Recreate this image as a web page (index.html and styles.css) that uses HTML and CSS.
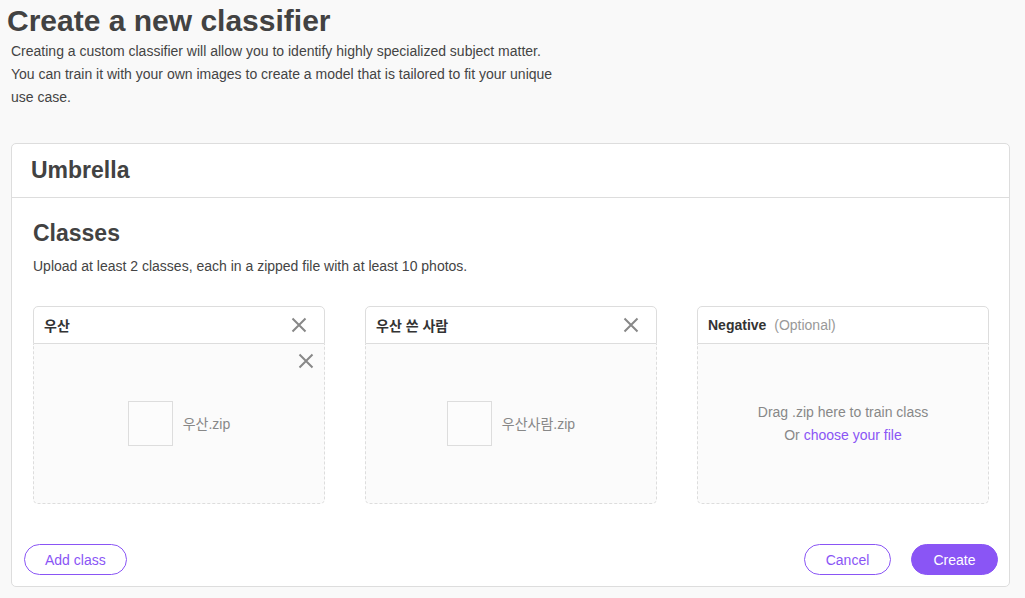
FILE: index.html
```html
<!DOCTYPE html>
<html lang="en">
<head>
<meta charset="utf-8">
<title>Create a new classifier</title>
<link rel="stylesheet" href="styles.css">
</head>
<body>
<div class="page">
  <h1 class="title">Create a new classifier</h1>
  <p class="intro">Creating a custom classifier will allow you to identify highly specialized subject matter. You can train it with your own images to create a model that is tailored to fit your unique use case.</p>

  <section class="card">
    <header class="card-head">
      <h2 class="card-title">Umbrella</h2>
    </header>
    <div class="card-body">
      <h2 class="section-title">Classes</h2>
      <p class="section-desc">Upload at least 2 classes, each in a zipped file with at least 10 photos.</p>

      <div class="classes">
        <div class="class-box">
          <div class="class-head">
            <span class="class-name">우산</span>
            <svg class="x-icon" viewBox="0 0 16 16" width="16" height="16"><path d="M1.5 1.5 14.5 14.5M14.5 1.5 1.5 14.5"/></svg>
          </div>
          <div class="class-drop filled">
            <svg class="x-icon x-file" viewBox="0 0 16 16" width="16" height="16"><path d="M1.5 1.5 14.5 14.5M14.5 1.5 1.5 14.5"/></svg>
            <div class="file">
              <span class="thumb"></span>
              <span class="file-name">우산.zip</span>
            </div>
          </div>
        </div>

        <div class="class-box">
          <div class="class-head">
            <span class="class-name">우산 쓴 사람</span>
            <svg class="x-icon" viewBox="0 0 16 16" width="16" height="16"><path d="M1.5 1.5 14.5 14.5M14.5 1.5 1.5 14.5"/></svg>
          </div>
          <div class="class-drop filled">
            <div class="file">
              <span class="thumb"></span>
              <span class="file-name">우산사람.zip</span>
            </div>
          </div>
        </div>

        <div class="class-box">
          <div class="class-head">
            <span class="class-name">Negative <span class="optional">(Optional)</span></span>
          </div>
          <div class="class-drop">
            <div class="drop-text">
              <div>Drag .zip here to train class</div>
              <div>Or <a class="link" href="#">choose your file</a></div>
            </div>
          </div>
        </div>
      </div>

      <div class="actions">
        <button class="btn btn-outline">Add class</button>
        <div class="actions-right">
          <button class="btn btn-outline">Cancel</button>
          <button class="btn btn-primary">Create</button>
        </div>
      </div>
    </div>
  </section>
</div>
</body>
</html>
```

FILE: styles.css
```css
* { box-sizing: border-box; }

html, body {
  margin: 0;
  padding: 0;
  background: #f9f9f9;
}

body {
  font-family: "Liberation Sans", Arial, "Noto Sans CJK KR", sans-serif;
  color: #444;
}

.page {
  padding: 4px 15px 0 11px;
}

.title {
  margin: 0 0 0 -4px;
  font-size: 30px;
  line-height: 34px;
  font-weight: bold;
  color: #424242;
}

.intro {
  margin: 2px 0 0 0;
  max-width: 545px;
  font-size: 14px;
  line-height: 23px;
  color: #444;
}

.card {
  margin-top: 34px;
  background: #fff;
  border: 1px solid #ddd;
  border-radius: 5px;
}

.card-head {
  height: 54px;
  border-bottom: 1px solid #ddd;
  padding: 0 19px;
  display: flex;
  align-items: center;
}

.card-title {
  margin: 0;
  font-size: 23px;
  font-weight: bold;
  color: #424242;
}

.card-body {
  padding: 21px 20px 0 21px;
}

.section-title {
  margin: 0;
  font-size: 23px;
  line-height: 28px;
  font-weight: bold;
  color: #424242;
}

.section-desc {
  margin: 8px 0 0 0;
  font-size: 14px;
  line-height: 23px;
  color: #444;
}

.classes {
  margin-top: 28px;
  display: grid;
  grid-template-columns: repeat(3, 1fr);
  gap: 40px;
}

.class-box {
  display: flex;
  flex-direction: column;
}

.class-head {
  height: 38px;
  border: 1px solid #ddd;
  border-radius: 5px 5px 0 0;
  background: #fff;
  padding: 0 17px 0 10px;
  display: flex;
  align-items: center;
  justify-content: space-between;
}

.class-name {
  font-size: 14px;
  font-weight: bold;
  color: #333;
}

.optional {
  font-weight: normal;
  color: #999;
  margin-left: 4px;
}

.x-icon {
  width: 16px;
  height: 16px;
  fill: none;
  stroke: #888;
  stroke-width: 2;
}

.class-drop {
  position: relative;
  height: 160px;
  border: 1px dashed #ddd;
  border-top: none;
  border-radius: 0 0 5px 5px;
  background: #fbfbfb;
  display: flex;
  align-items: center;
  justify-content: center;
}

.x-file {
  position: absolute;
  top: 9px;
  right: 10px;
}

.file {
  display: flex;
  align-items: center;
  gap: 10px;
  margin-top: -1px;
}

.thumb {
  width: 45px;
  height: 45px;
  border: 1px solid #ddd;
  background: #fcfcfc;
}

.file-name {
  font-size: 14px;
  color: #888;
}

.drop-text {
  text-align: center;
  font-size: 14px;
  line-height: 23px;
  color: #888;
}

.link {
  color: #8a55f5;
  text-decoration: none;
}

.actions {
  margin: 40px -9px 0 -9px;
  padding-bottom: 11px;
  display: flex;
  justify-content: space-between;
  align-items: center;
}

.actions-right {
  display: flex;
  gap: 20px;
}

.btn {
  height: 31px;
  min-width: 87px;
  padding: 0 20px;
  border-radius: 16px;
  font-family: "Liberation Sans", Arial, sans-serif;
  font-size: 14px;
  cursor: pointer;
}

.btn-outline {
  background: #fff;
  border: 1px solid #8a55f5;
  color: #8a55f5;
}

.btn-primary {
  background: #8a55f5;
  border: 1px solid #8a55f5;
  color: #fff;
}
```
